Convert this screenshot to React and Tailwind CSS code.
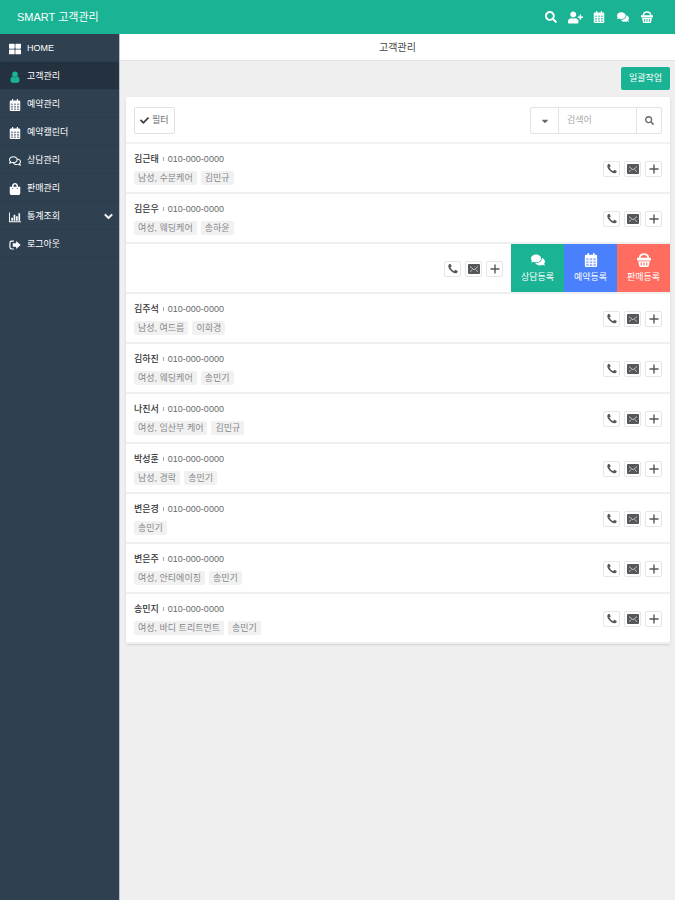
import { useState } from 'react';
import {
  FaSearch, FaUserPlus, FaComments, FaThLarge, FaRegComments,
  FaShoppingBag, FaChevronDown, FaCheck, FaCaretDown,
} from 'react-icons/fa';

const svgProps = (size) => ({ width: size, height: size, viewBox: '0 0 16 16', fill: 'currentColor', 'aria-hidden': true });

const CalendarIcon = ({ size = 12, className }) => (
  <svg {...svgProps(size)} className={className}>
    <path fillOpacity=".45" d="M2 5h12v10H2z" />
    <path fillRule="evenodd" d="M4 0h1.6v2h4.8V0H12v2h1.5A1.5 1.5 0 0 1 15 3.500v11A1.500 1.500 0 0 1 13.500 16h-11A1.500 1.500 0 0 1 1 14.500v-11A1.500 1.500 0 0 1 2.500 2H4zM2.500 6v2.400h2.800V6zm4.100 0v2.400h2.800V6zm4.100 0v2.400h2.800V6zM2.500 9.400v2.200h2.800V9.400zm4.100 0v2.200h2.800V9.400zm4.100 0v2.200h2.800V9.400zM2.500 12.600v2.200h2.800v-2.200zm4.100 0v2.200h2.800v-2.200zm4.100 0v2.200h2.800v-2.200z" />
  </svg>
);

const UserIcon = ({ size = 12 }) => (
  <svg {...svgProps(size)}>
    <circle cx="8" cy="4.500" r="3.700" />
    <path d="M4.600 7.300C2.800 7.600 2 9.800 2 12.600 2 14.400 3 15.500 4.600 15.500h6.800c1.600 0 2.600-1.100 2.600-2.900 0-2.800-.8-5-2.600-5.300-2 2-4.800 2-6.800 0z" />
  </svg>
);

const ChartIcon = ({ size = 12 }) => (
  <svg {...svgProps(size)}>
    <path d="M0 2h1.200v11.800H16V15H0zM3 9h2.200v4H3zm3.200-4h2.200v8H6.200zm3.200 2h2.200v6H9.400zm3.200-4h2.200v10h-2.200z" />
  </svg>
);

const SignOutIcon = ({ size = 12 }) => (
  <svg {...svgProps(size)}>
    <path d="M6.500 2v1.500h-3A1.500 1.500 0 0 0 2 5v6a1.500 1.500 0 0 0 1.500 1.500h3V14h-3a3 3 0 0 1-3-3V5a3 3 0 0 1 3-3zM9.500 2.700 15.500 8l-6 5.300V10.300H5V5.700h4.500z" />
  </svg>
);

const BasketIcon = ({ size = 12, className }) => (
  <svg {...svgProps(size)} className={className}>
    <path d="M3 6.500C3 3 5 1.200 8 1.200s5 1.800 5 5.300" fill="none" stroke="currentColor" strokeWidth="2" />
    <path fillRule="evenodd" d="M1 5.500h14a1 1 0 0 1 0 3.200H1a1 1 0 0 1 0-3.200zM1.500 9.300h13l-.9 5.400a1.400 1.400 0 0 1-1.400 1.200H3.800a1.400 1.400 0 0 1-1.400-1.200zM4.300 10.800v3.400h1.200v-3.400zm3.100 0v3.400h1.200v-3.400zm3.100 0v3.400h1.200v-3.400z" />
  </svg>
);

const PhoneIcon = () => (
  <svg width="12" height="12" viewBox="0 0 1792 1792" fill="currentColor" aria-hidden="true">
    <path d="M1600 1240q0 27-10 70.500t-21 68.500q-21 50-122 106-94 51-186 51-27 0-52.500-3.500t-57.500-12.500-47.500-14.500-55.500-20.500-49-18q-98-35-175-83-128-79-264.500-215.500t-215.500-264.500q-48-77-83-175-3-9-18-49t-20.500-55.500-14.500-47.500-12.500-57.500-3.500-52.500q0-92 51-186 56-101 106-122 25-11 68.500-21t70.500-10q14 0 21 3 18 6 53 76 11 19 30 54t35 63.500 31 53.500q3 4 17.500 25t21.500 35.500 7 28.500q0 20-28.500 50t-62 55-62 53-28.500 46q0 9 5 22.500t8.500 20.500 14 24 11.500 19q76 137 174 235t235 174q2 1 19 11.500t24 14 20.500 8.500 22.500 5q18 0 46-28.500t53-62 55-62 50-28.500q14 0 28.500 7t35.500 21.500 25 17.500q25 15 53.500 31t63.500 35 54 30q70 35 76 53 3 7 3 21z" />
  </svg>
);

const MailIcon = () => (
  <svg width="12" height="10" viewBox="0 0 12 10" aria-hidden="true">
    <rect width="12" height="10" rx="1" fill="currentColor" />
    <path d="M2 2.500 6 5.800l4-3.300M2 7.800l2.400-2.300M10 7.800 7.600 5.500" fill="none" stroke="#d5d6d7" strokeWidth=".8" />
  </svg>
);

const PlusIcon = () => (
  <svg width="10" height="10" viewBox="0 0 10 10" aria-hidden="true">
    <path d="M5 .5v9M.5 5h9" stroke="currentColor" strokeWidth="1.400" />
  </svg>
);

const MENU = [
  { label: 'HOME', icon: FaThLarge },
  { label: '고객관리', icon: UserIcon, active: true },
  { label: '예약관리', icon: CalendarIcon },
  { label: '예약캘린더', icon: CalendarIcon },
  { label: '상담관리', icon: FaRegComments },
  { label: '판매관리', icon: FaShoppingBag },
  { label: '통계조회', icon: ChartIcon, sub: true },
  { label: '로그아웃', icon: SignOutIcon },
];

const TOP_LINKS = [
  { label: '검색', icon: FaSearch, size: 12 },
  { label: '고객등록', icon: FaUserPlus, size: 15 },
  { label: '예약', icon: CalendarIcon, size: 12 },
  { label: '상담', icon: FaComments, size: 12 },
  { label: '판매', icon: BasketIcon, size: 12 },
];

const ACTIONS = [
  { label: '상담등록', icon: FaComments, bg: 'bg-[#1ab394]' },
  { label: '예약등록', icon: CalendarIcon, bg: 'bg-[#4a80fb]' },
  { label: '판매등록', icon: BasketIcon, bg: 'bg-[#ff6c60]' },
];

const CUSTOMERS = [
  { id: 1, name: '김근태', phone: '010-000-0000', tags: ['남성, 수분케어', '김민규'] },
  { id: 2, name: '김은우', phone: '010-000-0000', tags: ['여성, 웨딩케어', '송하윤'] },
  { id: 3, swiped: true },
  { id: 4, name: '김주석', phone: '010-000-0000', tags: ['남성, 여드름', '이희경'] },
  { id: 5, name: '김하진', phone: '010-000-0000', tags: ['여성, 웨딩케어', '송민기'] },
  { id: 6, name: '나진서', phone: '010-000-0000', tags: ['여성, 임산부 케어', '김민규'] },
  { id: 7, name: '박성훈', phone: '010-000-0000', tags: ['남성, 경락', '송민기'] },
  { id: 8, name: '변은경', phone: '010-000-0000', tags: ['송민기'] },
  { id: 9, name: '변은주', phone: '010-000-0000', tags: ['여성, 안티에이징', '송민기'] },
  { id: 10, name: '송민지', phone: '010-000-0000', tags: ['여성, 바디 트리트먼트', '송민기'] },
];

const RowButton = ({ label, children }) => (
  <button type="button" aria-label={label}
    className="flex h-4 w-[17px] items-center justify-center rounded-xs border border-[#e4e6e7] bg-white text-[#55575a]">
    {children}
  </button>
);

const CustomerRow = ({ customer }) => (
  <li className="flex h-[50px] items-stretch border-b-2 border-[#eeeff0]">
    <div className="flex min-w-0 flex-1 items-center justify-between px-2">
      <div className="flex flex-col gap-[5px]">
        {customer.name && (
          <>
            <p className="flex items-center gap-1 leading-[14px]">
              <strong className="font-medium text-[#333]">{customer.name}</strong>
              <span className="h-1 w-px bg-[#aaa]" />
              <span className="text-[#676a6c]">{customer.phone}</span>
            </p>
            <p className="flex gap-1">
              {customer.tags.map(tag => (
                <span key={tag} className="rounded-xs bg-[#f1f1f1] px-1 leading-[14px] text-[#85888a]">{tag}</span>
              ))}
            </p>
          </>
        )}
      </div>
      <div className="flex gap-1 pt-0.5">
        <RowButton label="전화"><PhoneIcon /></RowButton>
        <RowButton label="문자"><MailIcon /></RowButton>
        <RowButton label="더보기"><PlusIcon /></RowButton>
      </div>
    </div>
    {customer.swiped && (
      <div className="flex">
        {ACTIONS.map(({ label, icon: Icon, bg }) => (
          <button key={label} type="button"
            className={`flex w-[53px] flex-col items-center justify-center gap-1 leading-3 text-white ${bg}`}>
            <Icon size={14} />
            {label}
          </button>
        ))}
      </div>
    )}
  </li>
);

export default function App() {
  const [keyword, setKeyword] = useState('');

  return (
    <div className="flex min-h-screen flex-col bg-[#efefef] font-['Liberation_Sans','Noto_Sans_CJK_KR',sans-serif] text-[9px] text-[#676a6c]">
      <header className="flex h-[34px] items-center justify-between bg-[#1ab394] pr-4 pl-[17px] text-white">
        <h1 className="text-[11px]">SMART 고객관리</h1>
        <nav className="flex">
          {TOP_LINKS.map(({ label, icon: Icon, size }) => (
            <a key={label} href="#" aria-label={label} className="flex w-6 items-center justify-center">
              <Icon size={size} className="shrink-0" />
            </a>
          ))}
        </nav>
      </header>

      <div className="flex flex-1">
        {/* Sidebar */}
        <aside className="w-[120px] shrink-0 border-r border-[#b9c0c6] bg-[#2f4050]">
          <nav>
            {MENU.map(({ label, icon: Icon, active, sub }) => (
              <a key={label} href="#"
                className={`flex h-7 items-center gap-1.5 border-b border-[#2c3c4c] pt-0.5 pr-1.5 pl-[9px] text-white ${active ? 'bg-[#243240]' : ''}`}>
                <span className={`flex w-3 justify-center ${active ? 'text-[#1ab394]' : ''}`}><Icon size={12} /></span>
                <span className="flex-1">{label}</span>
                {sub && <FaChevronDown size={9} stroke="currentColor" strokeWidth={40} />}
              </a>
            ))}
          </nav>
        </aside>

        <main className="min-w-0 flex-1">
          <h2 className="border-b border-[#e2e3e4] bg-white pt-0.5 text-center text-[10px] leading-6 text-[#444]">고객관리</h2>

          <div className="pr-[5px] pl-1.5">
            <div className="flex justify-end pt-1.5 pb-[7px]">
              <button type="button" className="h-[23px] rounded-xs bg-[#1ab394] px-2 text-white">일괄작업</button>
            </div>

            {/* Customer list */}
            <section className="rounded-xs bg-white shadow-sm">
              <div className="flex items-center justify-between border-b-2 border-[#f1f2f3] px-2 pt-[10px] pb-2">
                <button type="button" className="flex h-[27px] items-center gap-[3px] rounded-xs border border-[#dfe1e2] px-[5px]">
                  <FaCheck size={9} className="text-[#444]" />필터
                </button>
                <form className="flex h-[27px] rounded-xs border border-[#e1e3e4]" onSubmit={e => e.preventDefault()}>
                  <button type="button" aria-label="검색 조건" className="flex w-7 items-center justify-center border-r border-[#e1e3e4]">
                    <FaCaretDown size={10} />
                  </button>
                  <input aria-label="검색어" placeholder="검색어" value={keyword} onChange={e => setKeyword(e.target.value)}
                    className="w-[77px] px-2 outline-none placeholder:text-[#aaa]" />
                  <button type="submit" aria-label="검색" className="flex w-[25px] items-center justify-center border-l border-[#e1e3e4]">
                    <FaSearch size={9} />
                  </button>
                </form>
              </div>
              <ul>
                {CUSTOMERS.map(c => <CustomerRow key={c.id} customer={c} />)}
              </ul>
            </section>
          </div>
        </main>
      </div>
    </div>
  );
}
